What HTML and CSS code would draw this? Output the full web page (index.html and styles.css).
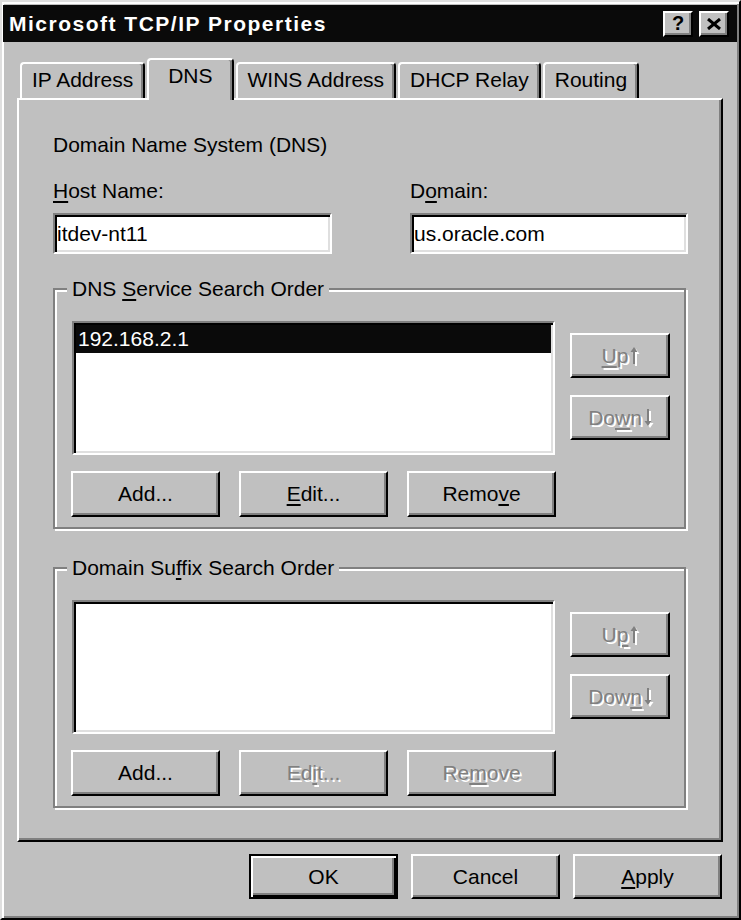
FILE: index.html
```html
<!DOCTYPE html>
<html lang="en">
<head>
    <meta charset="UTF-8">
    <title>Microsoft TCP/IP Properties</title>
    <link rel="stylesheet" href="styles.css">
</head>
<body>
    <div class="window">
        <div class="titlebar">
            <span class="title">Microsoft TCP/IP Properties</span>
            <div class="title-buttons">
                <button class="title-btn help">?</button>
                <button class="title-btn">
                    <svg width="16" height="12" viewBox="0 0 16 12">
                        <path d="M2 1L14 11M14 1L2 11" stroke="#000" stroke-width="3" fill="none"/>
                    </svg>
                </button>
            </div>
        </div>

        <div class="content">
            <div class="tabs">
                <div class="tab">IP Address</div>
                <div class="tab active">DNS</div>
                <div class="tab">WINS Address</div>
                <div class="tab">DHCP Relay</div>
                <div class="tab">Routing</div>
            </div>

            <div class="panel">
                <p class="intro">Domain Name System (DNS)</p>

                <div class="host-row">
                    <div class="field">
                        <label><u>H</u>ost Name:</label>
                        <div class="textbox">itdev-nt11</div>
                    </div>
                    <div class="field">
                        <label>D<u>o</u>main:</label>
                        <div class="textbox">us.oracle.com</div>
                    </div>
                </div>

                <fieldset class="group">
                    <legend>DNS <u>S</u>ervice Search Order</legend>
                    <div class="group-body">
                        <div class="listbox">
                            <div class="item selected">192.168.2.1</div>
                        </div>
                        <div class="side-buttons">
                            <button class="btn btn-small" disabled><u>U</u>p<svg class="arrow" width="8" height="17" viewBox="0 0 8 17"><path d="M4 0L7.5 5H0.5Z"/><rect x="3" y="4" width="2" height="13"/></svg></button>
                            <button class="btn btn-small" disabled>Do<u>w</u>n<svg class="arrow" width="8" height="17" viewBox="0 0 8 17"><path d="M4 17L7.5 12H0.5Z"/><rect x="3" y="0" width="2" height="13"/></svg></button>
                        </div>
                    </div>
                    <div class="btn-row">
                        <button class="btn">Add...</button>
                        <button class="btn"><u>E</u>dit...</button>
                        <button class="btn">Remo<u>v</u>e</button>
                    </div>
                </fieldset>

                <fieldset class="group group-second">
                    <legend>Domain Su<u>f</u>fix Search Order</legend>
                    <div class="group-body">
                        <div class="listbox"></div>
                        <div class="side-buttons">
                            <button class="btn btn-small" disabled>U<u>p</u><svg class="arrow" width="8" height="17" viewBox="0 0 8 17"><path d="M4 0L7.5 5H0.5Z"/><rect x="3" y="4" width="2" height="13"/></svg></button>
                            <button class="btn btn-small" disabled>Dow<u>n</u><svg class="arrow" width="8" height="17" viewBox="0 0 8 17"><path d="M4 17L7.5 12H0.5Z"/><rect x="3" y="0" width="2" height="13"/></svg></button>
                        </div>
                    </div>
                    <div class="btn-row">
                        <button class="btn">Add...</button>
                        <button class="btn" disabled>Ed<u>i</u>t...</button>
                        <button class="btn" disabled>Re<u>m</u>ove</button>
                    </div>
                </fieldset>
            </div>

            <div class="dialog-buttons">
                <button class="btn btn-dialog btn-default">OK</button>
                <button class="btn btn-dialog">Cancel</button>
                <button class="btn btn-dialog"><u>A</u>pply</button>
            </div>
        </div>
    </div>
</body>
</html>
```

FILE: styles.css
```css
body {
    margin: 0;
    font-family: "Liberation Sans", Arial, sans-serif;
    font-size: 21px;
    line-height: 24px;
    color: #000;
    background: #c0c0c0;
}
u {
    text-decoration-thickness: 2px;
    text-underline-offset: 3px;
}
.window {
    width: 741px;
    height: 920px;
    box-sizing: border-box;
    background: #c0c0c0;
    border: 2px solid;
    border-color: #dfdfdf #000 #000 #dfdfdf;
    box-shadow: inset 2px 2px #fff, inset -2px -2px #808080;
    padding: 3px 2px 0 1px;
}
.titlebar {
    height: 37px;
    background: #0a0a0a;
    display: flex;
    align-items: center;
    justify-content: space-between;
    padding: 0 8px 0 6px;
}
.title {
    color: #fff;
    font-weight: bold;
    letter-spacing: 1.5px;
}
.title-buttons {
    display: flex;
    gap: 6px;
}
.title-btn {
    width: 30px;
    height: 26px;
    box-sizing: border-box;
    padding: 0;
    display: flex;
    align-items: center;
    justify-content: center;
    background: #c0c0c0;
    border: 2px solid;
    border-color: #fff #000 #000 #fff;
    box-shadow: inset -2px -2px #808080;
    font-family: "Liberation Sans", Arial, sans-serif;
    font-size: 20px;
    font-weight: bold;
    color: #000;
}
.content {
    padding: 16px 14px 0;
}
.tabs {
    display: flex;
    align-items: flex-end;
    gap: 2px;
    height: 40px;
    padding-left: 3px;
}
.tab {
    height: 36px;
    box-sizing: border-box;
    padding: 4px 10px 0;
    border: 2px solid;
    border-bottom: 0;
    border-color: #fff #000 #000 #fff;
    border-radius: 4px 4px 0 0;
    box-shadow: inset -2px 0 #808080;
    white-space: nowrap;
}
.tab.active {
    height: 42px;
    margin-bottom: -2px;
    padding: 4px 19px 0;
    background: #c0c0c0;
    position: relative;
    z-index: 1;
}
.panel {
    height: 744px;
    box-sizing: border-box;
    border: 2px solid;
    border-color: #fff #000 #000 #fff;
    box-shadow: inset -2px -2px #808080;
    padding: 33px 33px 0 34px;
}
.intro {
    margin: 0;
}
.host-row {
    display: grid;
    grid-template-columns: 279px 278px;
    column-gap: 78px;
    margin-top: 22px;
}
.field label {
    display: block;
    margin-bottom: 10px;
}
.textbox {
    height: 41px;
    box-sizing: border-box;
    display: flex;
    align-items: center;
    padding: 0 2px;
    background: #fff;
    border: 2px solid;
    border-color: #808080 #fff #fff #808080;
    box-shadow: inset 2px 2px #000, inset -2px -2px #dfdfdf;
}
.group {
    margin: 23px 2px 0 0;
    padding: 20px 14px 10px 17px;
    border: 2px solid #808080;
    box-shadow: inset 2px 2px #fff, 2px 2px #fff;
    min-width: 0;
}
.group-second {
    margin-top: 27px;
}
.group legend {
    padding: 0 5px;
    margin-left: -5px;
    background: #c0c0c0;
    line-height: 24px;
}
.group-body {
    display: flex;
}
.listbox {
    width: 484px;
    height: 134px;
    box-sizing: border-box;
    padding: 2px;
    background: #fff;
    border: 2px solid;
    border-color: #808080 #fff #fff #808080;
    box-shadow: inset 2px 2px #000, inset -2px -2px #dfdfdf;
}
.item {
    height: 28px;
    line-height: 28px;
    padding-left: 2px;
}
.item.selected {
    background: #0a0a0a;
    color: #fff;
}
.side-buttons {
    display: flex;
    flex-direction: column;
    gap: 17px;
    margin-left: 15px;
    padding-top: 12px;
}
.btn {
    width: 149px;
    height: 46px;
    box-sizing: border-box;
    padding: 0;
    background: #c0c0c0;
    border: 2px solid;
    border-color: #fff #000 #000 #fff;
    box-shadow: inset -2px -2px #808080;
    font-family: inherit;
    font-size: 21px;
    line-height: 24px;
    color: #000;
    white-space: nowrap;
}
.btn:disabled {
    color: #808080;
    text-shadow: 2px 2px 0 #fff;
}
.arrow {
    fill: currentColor;
    margin-left: 2px;
    vertical-align: -1px;
}
.btn:disabled .arrow {
    filter: drop-shadow(2px 2px 0 #fff);
}
.btn-small {
    width: 100px;
    height: 45px;
}
.btn-row {
    display: flex;
    gap: 19px;
    margin: 16px 0 0 -1px;
}
.dialog-buttons {
    display: flex;
    justify-content: flex-end;
    gap: 13px;
    margin-top: 12px;
    padding-right: 1px;
}
.btn-dialog {
    height: 45px;
}
.btn-default {
    border-color: #000;
    box-shadow: inset 2px 2px #fff, inset -2px -2px #000, inset -4px -4px #808080;
}
```
